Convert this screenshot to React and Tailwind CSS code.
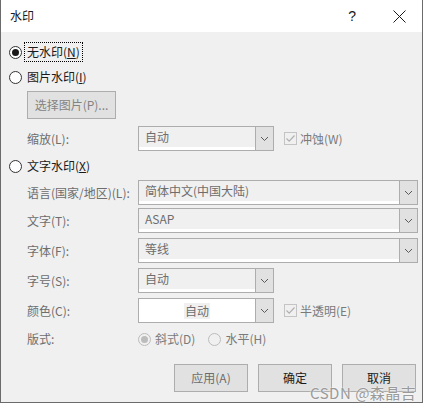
import React from 'react';

const font = { fontFamily: '"Microsoft YaHei", "Noto Sans CJK SC", "Noto Sans", sans-serif' };

function Chevron() {
  return (
    <svg width="9" height="6" viewBox="0 0 9 6" className="block">
      <path d="M1 1 L4.5 4.5 L8 1" fill="none" stroke="#5a5a5a" strokeWidth="1" />
    </svg>
  );
}

function Radio({ checked, disabled }) {
  const ring = disabled ? 'border-[#bcbcbc] bg-[#f0f0f0]' : 'border-[#333333] bg-white';
  const dot = disabled ? 'bg-[#bcbcbc]' : 'bg-[#1a1a1a]';
  return (
    <span className={`w-[13px] h-[13px] rounded-full border flex items-center justify-center shrink-0 ${ring}`}>
      {checked && <span className={`w-[7px] h-[7px] rounded-full ${dot}`} />}
    </span>
  );
}

function Check() {
  return (
    <span className="w-[13px] h-[13px] border border-[#c4c4c4] bg-[#f0f0f0] flex items-center justify-center shrink-0">
      <svg width="11" height="11" viewBox="0 0 11 11">
        <path d="M1.5 5.5 L4.2 8.2 L9.5 2.5" fill="none" stroke="#b0b0b0" strokeWidth="1.2" />
      </svg>
    </span>
  );
}

function Combo({ width, value, white, center }) {
  return (
    <div className={`h-[25px] border border-[#adadad] flex ${width}`}>
      <div className={`flex-1 flex items-center ${white ? 'bg-white' : 'bg-[#f0f0f0] border-b-[3px] border-white'} ${center ? 'justify-center' : 'pl-[6px]'}`}>
        <span className={`text-[12px] text-[#6d6d6d] leading-[16px] ${center ? 'bg-[#f0f0f0] px-[1px]' : ''}`}>{value}</span>
      </div>
      <div className="w-[18px] border-l border-[#adadad] bg-[#e1e1e1] flex items-center justify-center">
        <Chevron />
      </div>
    </div>
  );
}

function Row({ label, children, mt }) {
  return (
    <div className={`flex items-center pl-[26px] ${mt}`}>
      <span className="w-[111px] text-[12px] text-[#6d6d6d] leading-[16px]">{label}</span>
      {children}
    </div>
  );
}

function Btn({ label, dark }) {
  return (
    <div className={`w-[74px] h-[28px] border border-[#adadad] bg-[#e1e1e1] flex items-center justify-center text-[12px] ${dark ? 'text-[#1a1a1a]' : 'text-[#6d6d6d]'}`}>
      {label}
    </div>
  );
}

export default function App() {
  return (
    <div className="w-[425px] h-[405px] bg-white relative" style={font}>
      <div className="w-[423px] h-[403px] border-x border-b border-[#6b6b6b] flex flex-col">
        {/* title bar */}
        <div className="h-[32px] bg-white flex items-center pl-[9px] shrink-0">
          <span className="text-[12px] text-[#1a1a1a]">水印</span>
          <span className="ml-auto mr-[37px] text-[14px] text-[#1a1a1a]" style={{ fontFamily: '"Liberation Sans", sans-serif' }}>?</span>
          <svg width="13" height="13" viewBox="0 0 13 13" className="mr-[16px]">
            <path d="M0.5 0.5 L12.5 12.5 M12.5 0.5 L0.5 12.5" stroke="#1a1a1a" strokeWidth="1" />
          </svg>
        </div>

        <div className="flex-1 bg-[#f0f0f0] flex flex-col">
          <div className="flex items-center pl-[8px] mt-[10px] h-[20px]">
            <Radio checked />
            <span className="ml-[2px] h-[20px] px-[2px] border border-dotted border-black flex items-center text-[12px] text-[#1a1a1a]">
              无水印(<u>N</u>)
            </span>
          </div>
          <div className="flex items-center pl-[8px] mt-[5px] h-[20px]">
            <Radio />
            <span className="ml-[5px] text-[12px] text-[#1a1a1a]">图片水印(<u>I</u>)</span>
          </div>

          <div className="pl-[26px] mt-[4px]">
            <div className="w-[89px] h-[28px] border border-[#adadad] bg-[#e1e1e1] flex items-center justify-center text-[12px] text-[#838383]">
              选择图片(P)...
            </div>
          </div>

          <Row label="缩放(L):" mt="mt-[7px]">
            <Combo width="w-[136px]" value="自动" />
            <span className="ml-[10px]"><Check /></span>
            <span className="ml-[3px] text-[12px] text-[#7a7a7a]">冲蚀(W)</span>
          </Row>

          <div className="flex items-center pl-[8px] mt-[5px] h-[20px]">
            <Radio />
            <span className="ml-[5px] text-[12px] text-[#1a1a1a]">文字水印(<u>X</u>)</span>
          </div>

          <Row label="语言(国家/地区)(L):" mt="mt-[4px]">
            <Combo width="w-[280px]" value="简体中文(中国大陆)" />
          </Row>
          <Row label="文字(T):" mt="mt-[3px]">
            <Combo width="w-[280px]" value="ASAP" />
          </Row>
          <Row label="字体(F):" mt="mt-[5px]">
            <Combo width="w-[280px]" value="等线" />
          </Row>
          <Row label="字号(S):" mt="mt-[5px]">
            <Combo width="w-[136px]" value="自动" />
          </Row>
          <Row label="颜色(C):" mt="mt-[5px]">
            <Combo width="w-[136px]" value="自动" white center />
            <span className="ml-[10px]"><Check /></span>
            <span className="ml-[3px] text-[12px] text-[#7a7a7a]">半透明(E)</span>
          </Row>

          <div className="flex items-center pl-[26px] mt-[6px] h-[20px]">
            <span className="w-[111px] text-[12px] text-[#6d6d6d]">版式:</span>
            <Radio checked disabled />
            <span className="ml-[4px] text-[12px] text-[#7a7a7a]">斜式(D)</span>
            <span className="ml-[13px]"><Radio disabled /></span>
            <span className="ml-[4px] text-[12px] text-[#7a7a7a]">水平(H)</span>
          </div>

          <div className="flex justify-end gap-[10px] pr-[6px] mt-[15px]">
            <Btn label="应用(A)" />
            <Btn label="确定" dark />
            <Btn label="取消" dark />
          </div>
        </div>
      </div>

      <div className="absolute left-[310px] top-[384px] text-[15px] text-[#9a9a9a] tracking-[0.5px] leading-[18px]" style={{ textShadow: '0 0 2px #ffffff' }}>
        CSDN @森晶吉
      </div>
    </div>
  );
}
